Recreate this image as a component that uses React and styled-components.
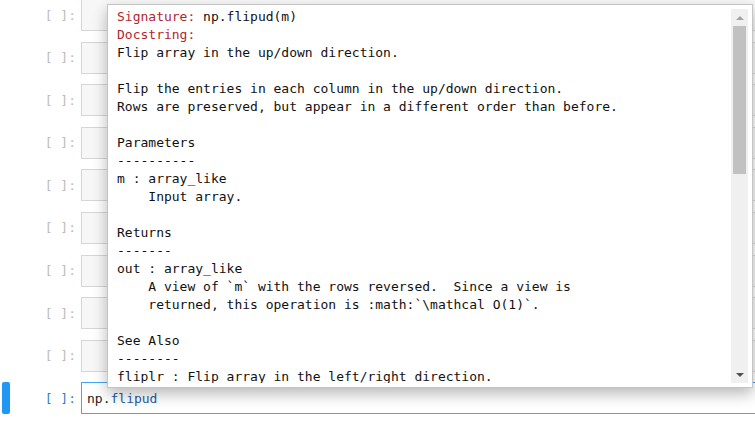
import React from "react";
import styled, { createGlobalStyle } from "styled-components";

const GlobalStyle = createGlobalStyle`
  html, body {
    margin: 0;
    padding: 0;
    background: #ffffff;
    overflow: hidden;
  }
  body {
    font-family: "DejaVu Sans Mono", "Liberation Mono", monospace;
  }
`;

const Notebook = styled.div`
  position: relative;
  width: 755px;
  height: 424px;
  overflow: hidden;
  display: flex;
  flex-direction: column;
  gap: 10.6px;
  padding-top: 0;
  margin-top: -1px;
  box-sizing: border-box;
`;

const CellRow = styled.div`
  display: flex;
  align-items: stretch;
  height: 32px;
  flex: none;
`;

const Collapser = styled.div`
  width: 8px;
  margin-left: 2px;
  border-radius: 2px;
  background: ${(p) => (p.$active ? "#2196f3" : "transparent")};
`;

const Prompt = styled.div`
  width: 66px;
  padding-right: 5px;
  display: flex;
  align-items: center;
  justify-content: flex-end;
  font-family: "DejaVu Sans Mono", "Liberation Mono", monospace;
  font-size: 13px;
  color: ${(p) => (p.$active ? "#307fc1" : "#bdbdbd")};
  white-space: pre;
`;

const InputBox = styled.div`
  flex: 1;
  margin-right: -10px;
  box-sizing: border-box;
  border: 1px solid ${(p) => (p.$active ? "#42a5f5" : "#d6d6d6")};
  background: ${(p) => (p.$active ? "#ffffff" : "#f7f7f7")};
  display: flex;
  align-items: center;
  padding-left: 5px;
  font-family: "DejaVu Sans Mono", "Liberation Mono", monospace;
  font-size: 13px;
  color: #222;
  white-space: pre;
`;

const Prop = styled.span`
  color: #1f5aa6;
`;

const Tooltip = styled.div`
  position: absolute;
  left: 107px;
  top: 5px;
  width: 646px;
  height: 384px;
  box-sizing: border-box;
  border: 1px solid #c4c4c4;
  background: #ffffff;
  box-shadow: 0 6px 14px rgba(0, 0, 0, 0.28);
  display: flex;
  overflow: hidden;
`;

const DocBody = styled.div`
  flex: 1;
  margin: 3px 0 4px 0;
  padding-left: 9px;
  overflow: hidden;
`;

const Pre = styled.pre`
  margin: 0;
  font-family: "DejaVu Sans Mono", "Liberation Mono", monospace;
  font-size: 13px;
  line-height: 18px;
  color: #111;
  white-space: pre;
`;

const Label = styled.span`
  color: #b3262d;
`;

const Scrollbar = styled.div`
  width: 17px;
  margin: 4px 4px 4px 2px;
  background: #f0f0f0;
  display: flex;
  flex-direction: column;
`;

const ArrowButton = styled.div`
  height: 17px;
  flex: none;
  display: flex;
  align-items: center;
  justify-content: center;
`;

const Arrow = styled.div`
  width: 0;
  height: 0;
  border-left: 4px solid transparent;
  border-right: 4px solid transparent;
  ${(p) =>
    p.$dir === "up"
      ? `border-bottom: 4px solid #a3a3a3;`
      : `border-top: 4px solid #505050;`}
`;

const Thumb = styled.div`
  height: 148px;
  margin: 0 2px;
  background: #c1c1c1;
  flex: none;
`;

const Spacer = styled.div`
  flex: 1;
`;

const doc = [
  "Flip array in the up/down direction.",
  "",
  "Flip the entries in each column in the up/down direction.",
  "Rows are preserved, but appear in a different order than before.",
  "",
  "Parameters",
  "----------",
  "m : array_like",
  "    Input array.",
  "",
  "Returns",
  "-------",
  "out : array_like",
  "    A view of `m` with the rows reversed.  Since a view is",
  "    returned, this operation is :math:`\\mathcal O(1)`.",
  "",
  "See Also",
  "--------",
  "fliplr : Flip array in the left/right direction.",
  "flip : Flip array in one or more dimensions.",
];

export default function App() {
  const cells = Array.from({ length: 10 }, (_, i) => i);
  return (
    <>
      <GlobalStyle />
      <Notebook>
        {cells.map((i) => {
          const active = i === 9;
          return (
            <CellRow key={i}>
              <Collapser $active={active} />
              <Prompt $active={active}>[ ]:</Prompt>
              <InputBox $active={active}>
                {active ? (
                  <>
                    np.<Prop>flipud</Prop>
                  </>
                ) : null}
              </InputBox>
            </CellRow>
          );
        })}
        <Tooltip>
          <DocBody>
            <Pre>
              <Label>Signature:</Label>
              {" np.flipud(m)\n"}
              <Label>Docstring:</Label>
              {"\n"}
              {doc.join("\n")}
            </Pre>
          </DocBody>
          <Scrollbar>
            <ArrowButton>
              <Arrow $dir="up" />
            </ArrowButton>
            <Thumb />
            <Spacer />
            <ArrowButton>
              <Arrow $dir="down" />
            </ArrowButton>
          </Scrollbar>
        </Tooltip>
      </Notebook>
    </>
  );
}
